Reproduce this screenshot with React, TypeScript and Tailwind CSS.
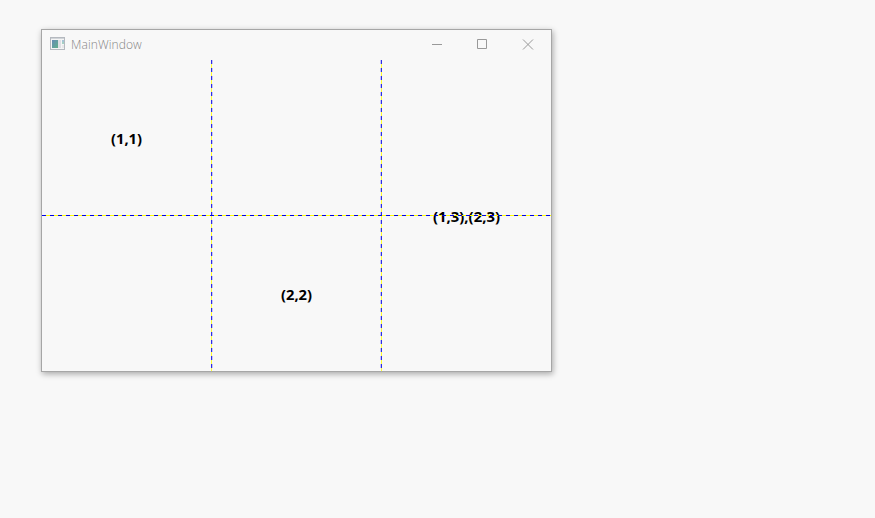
import React from "react";

const vDash = "bg-[repeating-linear-gradient(to_bottom,#2b2bea_0px,#2b2bea_4px,#ffff33_4px,#ffff33_8px)]";
const vHalo = "bg-[repeating-linear-gradient(to_bottom,#c6c6f6_0px,#c6c6f6_4px,transparent_4px,transparent_8px)]";

function Label({ text, width, className }: { text: string; width: number; className: string }) {
  return (
    <div className={`flex items-center justify-center ${className}`}>
      <svg width={width} height="20" className="block overflow-visible">
        <text x="0" y="16" textLength={width} lengthAdjust="spacingAndGlyphs" className="fill-black text-[14px] font-bold [font-family:'Open_Sans','Noto_Sans',sans-serif]">
          {text}
        </text>
      </svg>
    </div>
  );
}

function AppIcon() {
  return (
    <svg width="15" height="13" viewBox="0 0 15 13" shapeRendering="crispEdges" className="mb-[3px]">
      <defs>
        <linearGradient id="pane" x1="0" y1="0" x2="1" y2="1">
          <stop offset="0" stopColor="#668bb5" />
          <stop offset="1" stopColor="#60b08c" />
        </linearGradient>
      </defs>
      <rect x="0.5" y="0.5" width="14" height="12" fill="#f5f5f5" stroke="#b5b9bf" />
      <rect x="1" y="1" width="13" height="1" fill="#d0d4d8" />
      <rect x="2" y="3" width="6" height="8" fill="url(#pane)" />
      <rect x="8" y="3" width="3" height="8" fill="#dedfe4" />
      <rect x="12" y="3" width="2" height="2" fill="#a5c4d6" />
      <rect x="12" y="5" width="2" height="2" fill="#a5d0c4" />
      <rect x="12" y="8" width="2" height="3" fill="#e8e8ea" />
    </svg>
  );
}

export default function App() {
  return (
    <main className="h-[518px] w-[875px] overflow-hidden bg-[#f8f8f8] pt-[29px] pl-[41px]">
      <section className="flex h-[343px] w-[511px] flex-col border border-[#a6a6a6] bg-[#f8f8f8] shadow-[1px_2px_6px_rgba(0,0,0,0.33)]">
        <header className="flex h-[30px] items-center pl-2">
          <AppIcon />
          <h1 className="ml-[6px] w-[72px] whitespace-nowrap text-[12px] leading-4 font-light tracking-[0.1px] text-[#858585] [font-family:'Open_Sans','Noto_Sans',sans-serif]">
            MainWindow
          </h1>
          <div className="ml-auto flex h-full items-center">
            <svg width="137" height="30" viewBox="0 0 137 30" fill="none" stroke="#999">
              <path d="M18 14.5h10M63.5 9.5h9v9h-9z" />
              <path d="M109 9.5l10 10M119 9.5l-10 10" />
            </svg>
          </div>
        </header>
        <div className="relative grid min-h-0 flex-1 grid-cols-3 grid-rows-2">
          <Label text="(1,1)" width={31} className="col-start-1 row-start-1" />
          <Label text="(2,2)" width={31} className="col-start-2 row-start-2 pt-px" />
          <Label text="(1,3),(2,3)" width={67} className="col-start-3 row-span-2 row-start-1" />
          <i className={`absolute top-0 left-[169px] h-full w-px ${vDash}`} />
          <i className={`absolute top-0 left-[170px] h-full w-px ${vHalo}`} />
          <i className={`absolute top-0 left-[339px] h-full w-px ${vDash}`} />
          <i className={`absolute top-0 left-[338px] h-full w-px ${vHalo}`} />
          <i className="absolute top-[155px] left-0 h-px w-full bg-[repeating-linear-gradient(to_right,#0000e6_0px,#0000e6_4px,#ffff00_4px,#ffff00_8px)]" />
        </div>
      </section>
    </main>
  );
}
